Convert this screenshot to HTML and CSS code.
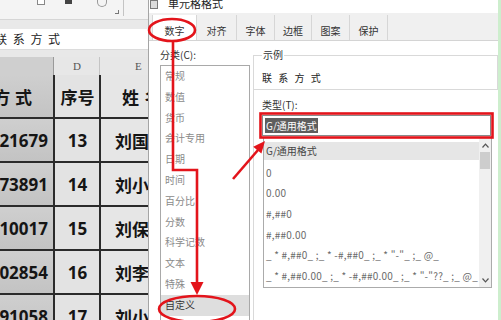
FILE: index.html
```html
<!DOCTYPE html>
<html lang="zh">
<head>
<meta charset="utf-8">
<title>单元格格式</title>
<link rel="stylesheet" href="styles.css">
</head>
<body>
<div class="screen">
  <div class="sheet">
    <div class="toolbar">
      <span class="tb i1"></span>
      <span class="tb i2"></span>
      <span class="tb i3"></span>
      <span class="tb corner"></span>
      <span class="tb sep"></span>
    </div>
    <div class="band"></div>
    <div class="formula">联 系 方 式</div>
    <div class="band2"></div>
    <div class="colheads">
      <div class="ch sel"></div>
      <div class="ch d">D</div>
      <div class="ch e">E</div>
    </div>
    <div class="grid">
      <div class="cell c hdr">方 式</div><div class="cell d">序号</div><div class="cell e hdr">姓 名</div>
      <div class="cell c num">21679</div><div class="cell d num">13</div><div class="cell e">刘国</div>
      <div class="cell c num">73891</div><div class="cell d num">14</div><div class="cell e">刘小</div>
      <div class="cell c num">10017</div><div class="cell d num">15</div><div class="cell e">刘保</div>
      <div class="cell c num">02854</div><div class="cell d num">16</div><div class="cell e">刘李</div>
      <div class="cell c num">91058</div><div class="cell d num">17</div><div class="cell e">刘小</div>
    </div>
  </div>

  <div class="dialog">
    <div class="titlebar">
      <span class="ticon"></span>
      <span class="ttext">单元格格式</span>
    </div>
    <div class="tabs">
      <div class="tab active w45">数字</div>
      <div class="tab w40">对齐</div>
      <div class="tab w38">字体</div>
      <div class="tab w37">边框</div>
      <div class="tab w38">图案</div>
      <div class="tab w38">保护</div>
    </div>
    <div class="dbody">
      <div class="leftpane">
        <div class="label">分类(C):</div>
        <div class="catlist">
          <div class="cat">常规</div>
          <div class="cat">数值</div>
          <div class="cat">货币</div>
          <div class="cat">会计专用</div>
          <div class="cat">日期</div>
          <div class="cat">时间</div>
          <div class="cat">百分比</div>
          <div class="cat">分数</div>
          <div class="cat">科学记数</div>
          <div class="cat">文本</div>
          <div class="cat">特殊</div>
          <div class="cat cur">自定义</div>
        </div>
      </div>
      <div class="rightpane">
        <fieldset class="sample">
          <legend>示例</legend>
          <div class="sampletext">联 系 方 式</div>
        </fieldset>
        <div class="typebox">
          <div class="label">类型(T):</div>
          <div class="typeinput"><span class="seltext">G/通用格式</span></div>
          <div class="fmtlist">
            <div class="fmtitems">
              <div class="fmt cur">G/通用格式</div>
              <div class="fmt">0</div>
              <div class="fmt">0.00</div>
              <div class="fmt">#,##0</div>
              <div class="fmt">#,##0.00</div>
              <div class="fmt">_ * #,##0_ ;_ * -#,##0_ ;_ * "-"_ ;_ @_</div>
              <div class="fmt">_ * #,##0.00_ ;_ * -#,##0.00_ ;_ * "-"??_ ;_ @_</div>
            </div>
            <div class="scrollbar">
              <div class="sarrow"><svg width="7" height="5" viewBox="0 0 7 5"><path d="M0.5 4.5 L3.5 1.2 L6.5 4.5" fill="none" stroke="#555" stroke-width="1.2"/></svg></div>
              <div class="thumb"></div>
              <div class="sfill"></div>
              <div class="sarrow"><svg width="7" height="5" viewBox="0 0 7 5"><path d="M0.5 0.5 L3.5 3.8 L6.5 0.5" fill="none" stroke="#555" stroke-width="1.2"/></svg></div>
            </div>
          </div>
        </div>
      </div>
    </div>
  </div>
</div>

<svg class="marks" width="501" height="320" viewBox="0 0 501 320">
  <g fill="none" stroke="#e3141b" stroke-width="2.6" stroke-linejoin="miter">
    <ellipse cx="172" cy="30" rx="23" ry="11"/>
    <polyline points="173,41 173,170 197,170 197,284"/>
    <ellipse cx="197" cy="309" rx="38" ry="13"/>
    <rect x="260.5" y="113.5" width="232" height="24"/>
    <line x1="233" y1="179" x2="258" y2="150"/>
  </g>
  <g fill="#e3141b">
    <polygon points="197,295 190.5,282 203.5,282"/>
    <polygon points="265,141 261.4,153.6 253.2,146.8"/>
  </g>
</svg>
</body>
</html>
```

FILE: styles.css
```css
* { box-sizing: border-box; }

html, body {
  margin: 0;
  padding: 0;
  width: 501px;
  height: 320px;
  overflow: hidden;
  background: #ffffff;
}

body {
  font-family: "Noto Sans CJK SC", "Noto Sans", sans-serif;
  position: relative;
}

.screen {
  display: flex;
  width: 501px;
  height: 320px;
}

/* ---------- spreadsheet ---------- */
.sheet {
  width: 148px;
  flex: none;
  overflow: hidden;
  display: flex;
  flex-direction: column;
  background: #ececec;
}

.toolbar {
  height: 20px;
  flex: none;
  background: #f4f4f4;
  border-bottom: 1px solid #d6d6d6;
  display: flex;
  align-items: flex-start;
}
.tb { display: block; flex: none; }
.i1 { width: 8px; height: 5px; margin-left: 37px; border: 1px solid #888; border-top: none; background: #fff; }
.i2 { width: 7px; height: 4px; margin-left: 20px; background: #444; }
.i3 { width: 10px; height: 7px; margin-left: 25px; border: 1px solid #999; border-top: none; border-radius: 0 0 5px 5px; }
.corner { width: 4px; height: 4px; margin-left: 8px; margin-top: 10px; border-right: 1px solid #777; border-bottom: 1px solid #777; }
.sep { width: 1px; height: 16px; margin-left: 4px; background: #c4c4c4; }

.band { height: 9px; flex: none; background: #e9e9e9; }

.formula {
  height: 20px;
  flex: none;
  background: #ffffff;
  font-size: 12px;
  line-height: 20px;
  color: #222;
  word-spacing: 3px;
  white-space: nowrap;
  text-indent: -5px;
}

.band2 { height: 8px; flex: none; background: #e8e8e8; border-top: 1px solid #dcdcdc; }

.colheads {
  height: 18px;
  flex: none;
  display: grid;
  grid-template-columns: 54px 46px 60px;
  background: #e7e7e7;
}
.ch {
  font-family: "Liberation Serif", serif;
  font-size: 11px;
  line-height: 18px;
  color: #555;
  border-right: 1px solid #c4c4c4;
}
.ch.sel { background: #cfcfcf; border-right: 1px solid #9a9a9a; }
.ch.d { padding-left: 19px; }
.ch.e { padding-left: 35px; }

.grid {
  flex: none;
  display: grid;
  grid-template-columns: 53px 44px 70px;
  grid-auto-rows: 42px;
  gap: 2px;
  background: #2b2b2b;
  padding-bottom: 2px;
}
.cell {
  display: flex;
  align-items: center;
  white-space: nowrap;
  overflow: hidden;
  font-family: "Noto Sans", "Noto Sans CJK SC", sans-serif;
  font-weight: 700;
  font-size: 17px;
  color: #151515;
}
.cell.c {
  background: linear-gradient(#cfcfcf, #c3c3c3);
  justify-content: flex-end;
  padding-right: 5px;
}
.cell.c.hdr { padding-right: 21px; word-spacing: 1px; }
.cell.d {
  background: #e3e3e3;
  justify-content: center;
  padding-left: 1px;
}
.cell.e {
  background: #e6e6e6;
  padding-left: 14px;
}
.cell.e.hdr { padding-left: 21px; word-spacing: 2px; }
.cell.hdr, .cell.d { font-family: "Noto Sans CJK SC", sans-serif; }
.cell.num { font-family: "Noto Sans", sans-serif; }

/* ---------- dialog ---------- */
.dialog {
  flex: 1;
  min-width: 0;
  background: #ffffff;
  border-left: 1px solid #a5a5a5;
  border-right: 3px solid #cdeecd;
  display: flex;
  flex-direction: column;
  color: #333;
  font-size: 10px;
}

.titlebar {
  height: 13px;
  flex: none;
  overflow: hidden;
  display: flex;
  align-items: flex-end;
  background: #ffffff;
}
.ticon {
  width: 8px;
  height: 9px;
  margin-left: 1px;
  margin-bottom: 4px;
  border: 1px solid #7a7a7a;
  background: #dcdcdc;
  flex: none;
}
.ttext {
  margin-left: 10px;
  font-size: 11px;
  line-height: 20px;
  color: #222;
}

.tabs {
  height: 28px;
  flex: none;
  background: #f0f0f0;
  border-bottom: 1px solid #d4d4d4;
  display: flex;
  align-items: flex-end;
  padding-left: 3px;
}
.tab {
  height: 25px;
  padding-top: 10px;
  line-height: 12px;
  text-align: center;
  border-right: 1px solid #d6d6d6;
  color: #333;
  flex: none;
}
.tab.active { background: #ffffff; border-left: 1px solid #d6d6d6; }
.w45 { width: 45px; }
.w40 { width: 40px; }
.w38 { width: 38px; }
.w37 { width: 37px; }

.dbody {
  flex: 1;
  display: flex;
  min-height: 0;
}

.label {
  line-height: 12px;
  color: #333;
  white-space: nowrap;
}

.leftpane {
  width: 104px;
  flex: none;
  padding-left: 11px;
  padding-top: 8px;
  display: flex;
  flex-direction: column;
}
.catlist {
  margin-top: 4px;
  width: 90px;
  flex: 1;
  border: 1px solid #a9a9a9;
  border-bottom: none;
  background: #fff;
}
.cat {
  height: 20.8px;
  line-height: 20.8px;
  padding-left: 4px;
  color: #8a8a8a;
  white-space: nowrap;
}
.cat.cur { background: #dedede; color: #333; }

.rightpane {
  flex: 1;
  min-width: 0;
  padding-top: 8px;
  display: flex;
  flex-direction: column;
}

.sample {
  margin: 0;
  padding: 0 8px 5px 8px;
  border: 1px solid #d9d9d9;
  min-width: 0;
}
.sample legend {
  padding: 0 1px;
  line-height: 12px;
  color: #333;
}
.sampletext {
  margin-top: 11px;
  line-height: 12px;
  color: #222;
  word-spacing: 4px;
  white-space: nowrap;
}

.typebox {
  flex: 1;
  border-left: 1px solid #d9d9d9;
  padding-left: 8px;
  padding-top: 9px;
}

.typeinput {
  margin-top: 4px;
  width: 229px;
  height: 21px;
  border: 1px solid #8a8a8a;
  padding-left: 2px;
  padding-top: 2px;
  background: #fff;
}
.seltext {
  display: inline-block;
  background: #5e5e5e;
  color: #ffffff;
  line-height: 15px;
  padding: 0 1px;
}

.fmtlist {
  margin-top: 1px;
  margin-left: 1px;
  width: 229px;
  height: 151px;
  border: 1px solid #ababab;
  display: flex;
}
.fmtitems {
  flex: 1;
  min-width: 0;
  padding-top: 4px;
  overflow: hidden;
}
.fmt {
  height: 20.7px;
  line-height: 20px;
  padding-left: 2px;
  color: #6a6a6a;
  white-space: nowrap;
  letter-spacing: 0.2px;
  word-spacing: 0;
}
.fmt.cur { background: #e6e6e6; color: #444; height: 18px; margin-bottom: 2.7px; line-height: 18px; letter-spacing: 0; }

.scrollbar {
  width: 12px;
  flex: none;
  background: #f0f0f0;
  display: flex;
  flex-direction: column;
  align-items: center;
}
.sarrow {
  height: 14px;
  display: flex;
  align-items: center;
  justify-content: center;
}
.thumb {
  width: 10px;
  height: 17px;
  background: #cdcdcd;
}
.sfill { flex: 1; }

/* ---------- annotations overlay ---------- */
.marks {
  position: absolute;
  left: 0;
  top: 0;
  pointer-events: none;
}
```
